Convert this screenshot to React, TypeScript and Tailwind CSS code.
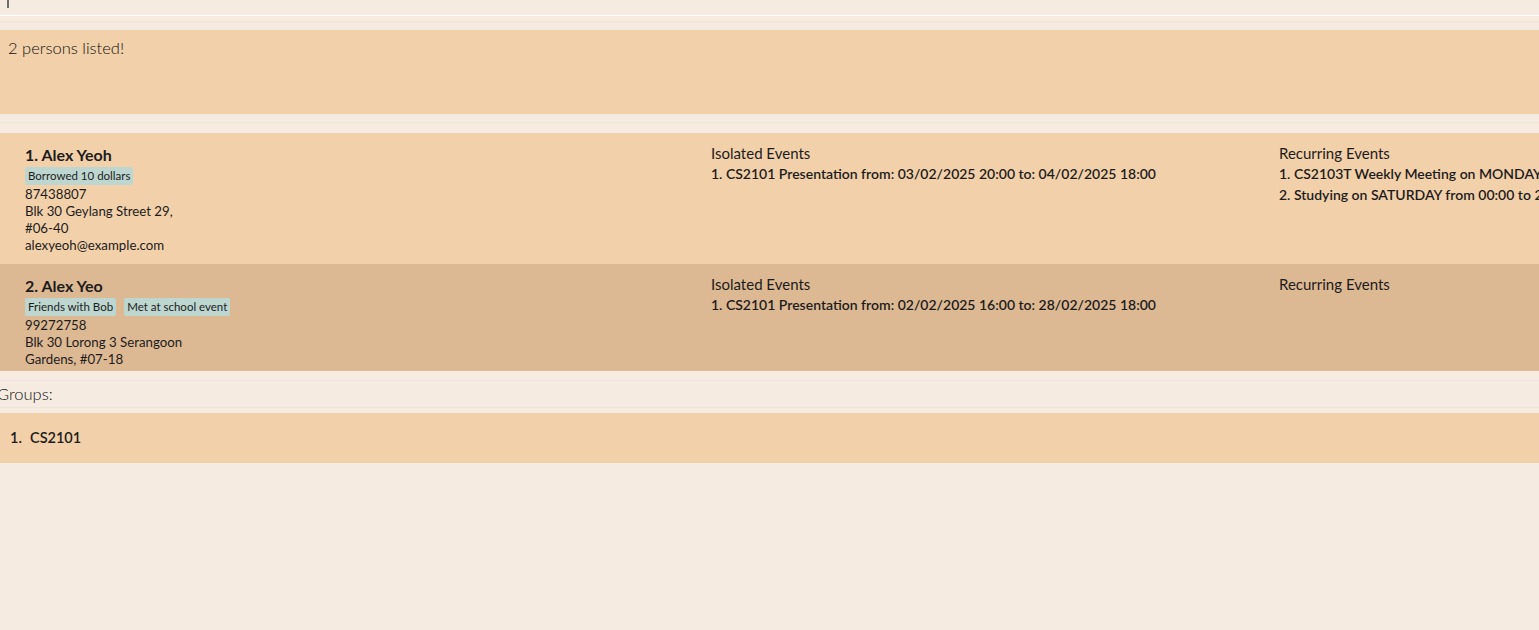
const persons = [
  {
    name: "1. Alex Yeoh",
    tags: ["Borrowed 10 dollars"],
    phone: "87438807",
    address: ["Blk 30 Geylang Street 29,", "#06-40"],
    email: "alexyeoh@example.com",
    isolated: ["1. CS2101 Presentation from: 03/02/2025 20:00 to: 04/02/2025 18:00"],
    recurring: [
      "1. CS2103T Weekly Meeting on MONDAY from 14:00 to 16:00",
      "2. Studying on SATURDAY from 00:00 to 23:59",
    ],
    bg: "bg-[#f2d0aa]",
  },
  {
    name: "2. Alex Yeo",
    tags: ["Friends with Bob", "Met at school event"],
    phone: "99272758",
    address: ["Blk 30 Lorong 3 Serangoon", "Gardens, #07-18"],
    email: "alexyeo@example.com",
    isolated: ["1. CS2101 Presentation from: 02/02/2025 16:00 to: 28/02/2025 18:00"],
    recurring: [],
    bg: "bg-[#dcb893]",
  },
];

function PersonCard({ p }: { p: (typeof persons)[number] }) {
  return (
    <div className={`flex ${p.bg} pt-[12px] pb-[10px] text-[#1c1c1c]`}>
      <div className="w-[711px] shrink-0 pl-[25px]">
        <div className="text-[16px] font-bold leading-[20px]">{p.name}</div>
        <div className="flex gap-[8px] mt-[2px] mb-[1px]">
          {p.tags.map((t) => (
            <span
              key={t}
              className="bg-[#bdd7d0] rounded-[2px] px-[3px] h-[18px] flex items-center text-[11.5px] leading-[14px]"
            >
              {t}
            </span>
          ))}
        </div>
        <div className="text-[13.25px] leading-[17px]">
          <div>{p.phone}</div>
          {p.address.map((a) => (
            <div key={a}>{a}</div>
          ))}
          <div>{p.email}</div>
        </div>
      </div>
      <div className="w-[568px] shrink-0 leading-[21px]">
        <div className="text-[15px] leading-[17px] mb-[1px]">Isolated Events</div>
        {p.isolated.map((e) => (
          <div key={e} className="text-[14px] font-semibold whitespace-nowrap">
            {e}
          </div>
        ))}
      </div>
      <div className="flex-1 min-w-0 overflow-hidden leading-[21px]">
        <div className="text-[15px] leading-[17px] mb-[1px]">Recurring Events</div>
        {p.recurring.map((e) => (
          <div key={e} className="text-[14px] font-semibold whitespace-nowrap">
            {e}
          </div>
        ))}
      </div>
    </div>
  );
}

export default function App() {
  return (
    <div
      className="w-[1539px] h-[630px] overflow-hidden bg-[#f5ebe1] text-[#1c1c1c]"
      style={{ fontFamily: "Lato, 'Noto Sans', sans-serif" }}
    >
      {/* command box */}
      <div className="h-[15px] pl-[7px]">
        <div className="w-[2px] h-[8px] bg-[#6e6e6e]" />
      </div>
      <div className="h-[1px] bg-white" />
      <div className="h-[14px] flex flex-col">
        <div className="h-[5px]" />
        <div className="h-[2px] bg-[#f1e4d8]" />
      </div>

      {/* result display */}
      <div className="h-[84px] bg-[#f2d0aa] px-[8px] pt-[8px]">
        <div className="text-[16.5px] font-light text-[#111] leading-[20px]">2 persons listed!</div>
      </div>

      <div className="h-[19px] flex flex-col">
        <div className="h-[8px]" />
        <div className="h-[1px] bg-[#f1e5d9]" />
      </div>

      {/* person list */}
      <div className="h-[238px] overflow-hidden flex flex-col">
        {persons.map((p) => (
          <PersonCard key={p.name} p={p} />
        ))}
      </div>

      {/* groups */}
      <div className="h-[42px] flex flex-col">
        <div className="h-[9px]" />
        <div className="h-[1px] bg-[#f1e5d9]" />
        <div className="text-[16.5px] font-light text-[#111] leading-[20px] -ml-[3px] mt-[3px]">Groups:</div>
        <div className="h-[1px] bg-[#f1e5d9] mt-[3px]" />
      </div>
      <div className="h-[50px] bg-[#f2d0aa] flex items-center pl-[10px] text-[14.5px] font-semibold">
        <span className="w-[20px]">1.</span>
        <span>CS2101</span>
      </div>
    </div>
  );
}
